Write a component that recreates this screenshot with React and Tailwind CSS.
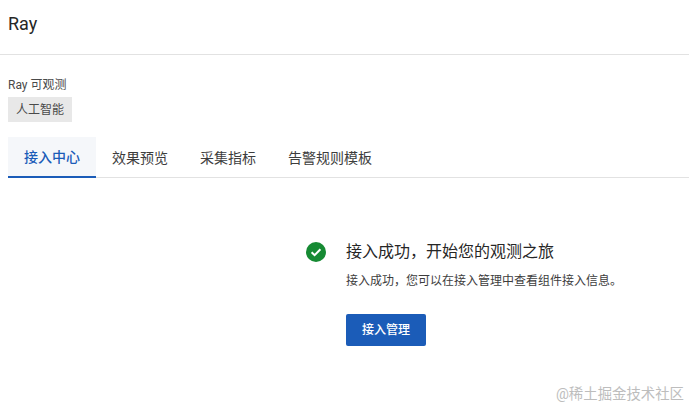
import React from 'react';

const font = "font-['Roboto','Noto_Sans_CJK_SC',sans-serif]";

const tabs = ['接入中心', '效果预览', '采集指标', '告警规则模板'];

const App = () => {
  return (
    <div className={`relative h-[409px] w-[689px] overflow-hidden bg-white ${font}`}>
      {/* Page title */}
      <div className="flex h-[55px] items-center border-b border-[#e2e2e2] px-2 pb-[6px]">
        <span className="text-lg leading-6 text-[#262626]">Ray</span>
      </div>

      {/* Meta info */}
      <div className="px-2 pt-[22px]">
        <div className="text-xs leading-4 text-[#4a4a4a]">Ray 可观测</div>
        <span className="mt-[4px] inline-flex h-[25px] items-center bg-[#e8e8e8] px-2 text-xs text-[#4a4a4a]">
          人工智能
        </span>
      </div>

      {/* Tabs */}
      <div className="ml-2 mt-[15px] flex h-[41px] border-b border-[#e2e2e2]">
        {tabs.map((tab, i) => (
          <div
            key={tab}
            className={`flex h-[41px] items-center px-4 text-sm ${
              i === 0
                ? 'border-b-2 border-[#1b5cb8] bg-[#f5f7fa] font-medium text-[#1b5cb8]'
                : 'text-[#3d3d3d]'
            }`}
          >
            {tab}
          </div>
        ))}
      </div>

      {/* Success result */}
      <div className="flex gap-5 pl-[306px] pt-[63px]">
        <svg className="mt-px h-5 w-5 shrink-0" viewBox="0 0 20 20">
          <circle cx="10" cy="10" r="10" fill="#168a33" />
          <path d="M5.6 10.3l3 2.9 5.8-5.9" fill="none" stroke="#fff" strokeWidth="2" />
        </svg>
        <div>
          <div className="text-base leading-[22px] text-[#262626]">接入成功，开始您的观测之旅</div>
          <div className="mt-[8px] text-xs leading-[20px] text-[#3d3d3d]">
            接入成功，您可以在接入管理中查看组件接入信息。
          </div>
          <button className="mt-[23px] h-8 w-20 rounded-[2px] bg-[#1b5cb8] text-xs font-medium text-white">
            接入管理
          </button>
        </div>
      </div>

      {/* Watermark */}
      <div className="absolute right-[5px] bottom-[4px] text-[14.4px] leading-5 text-[#bdbdbd]">@稀土掘金技术社区</div>
    </div>
  );
};

export default App;
